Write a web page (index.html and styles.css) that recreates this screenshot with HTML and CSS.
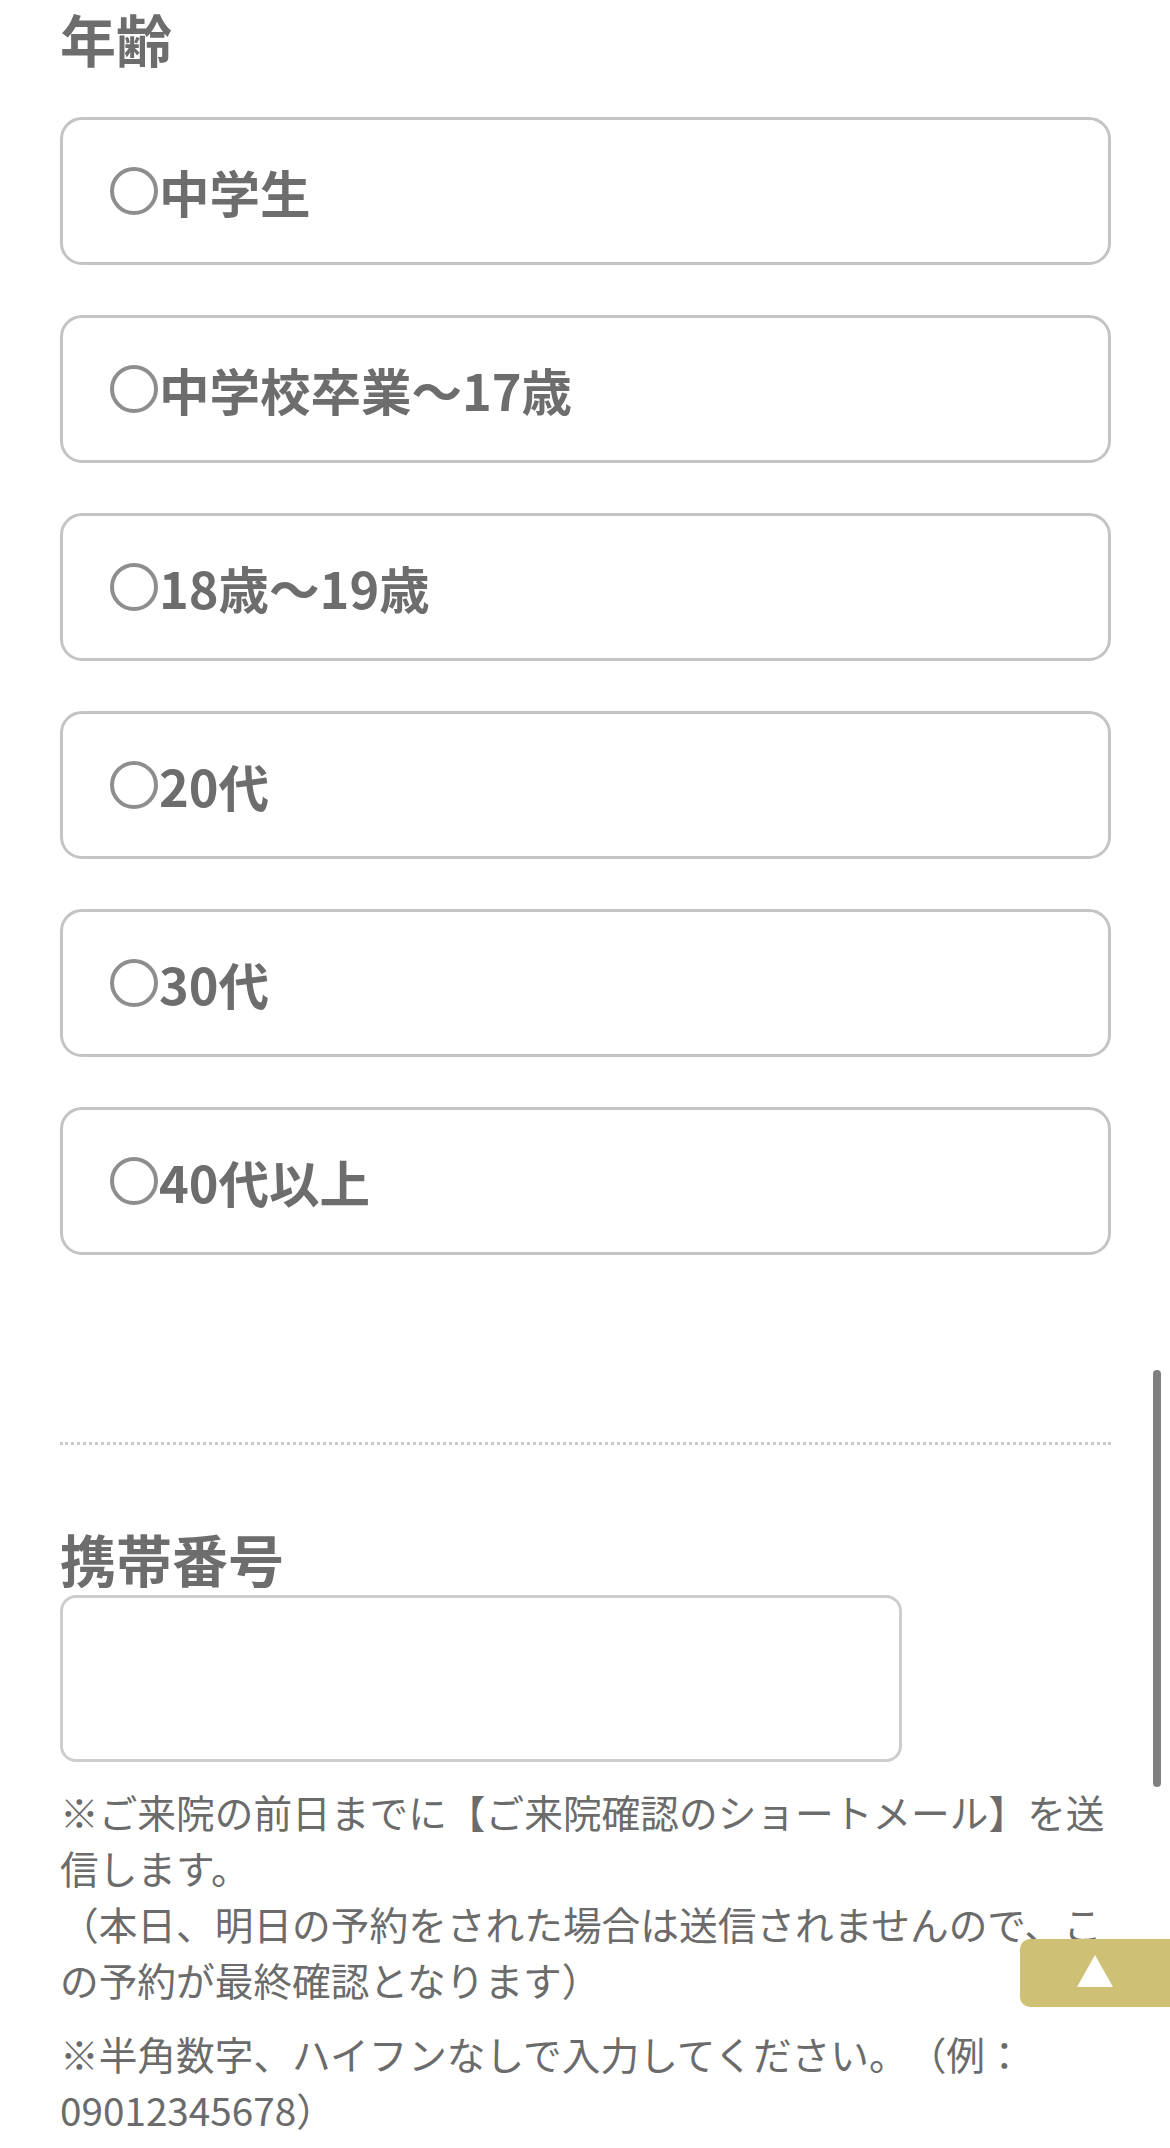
FILE: index.html
```html
<!DOCTYPE html>
<html lang="ja">
<head>
<meta charset="utf-8">
<title>予約フォーム</title>
<link rel="stylesheet" href="styles.css">
</head>
<body>
<main class="page">
  <section class="field">
    <h2 class="field-title">年齢</h2>
    <div class="options">
      <label class="option"><span class="radio"></span><span class="option-label">中学生</span></label>
      <label class="option"><span class="radio"></span><span class="option-label">中学校卒業～17歳</span></label>
      <label class="option"><span class="radio"></span><span class="option-label">18歳～19歳</span></label>
      <label class="option"><span class="radio"></span><span class="option-label">20代</span></label>
      <label class="option"><span class="radio"></span><span class="option-label">30代</span></label>
      <label class="option"><span class="radio"></span><span class="option-label">40代以上</span></label>
    </div>
  </section>

  <hr class="divider">

  <section class="field field-phone">
    <h2 class="field-title">携帯番号</h2>
    <div class="text-input"></div>
    <p class="note">※ご来院の前日までに【ご来院確認のショートメール】を送信します。<br>（本日、明日の予約をされた場合は送信されませんので、この予約が最終確認となります）</p>
    <p class="note">※半角数字、ハイフンなしで入力してください。（例：09012345678）</p>
  </section>
</main>

<div class="scroll-indicator"></div>
<a class="to-top" href="#">
  <svg class="to-top-icon" viewBox="0 0 36 32" width="36" height="32" aria-hidden="true"><polygon points="18,0 36,32 0,32" fill="#ffffff"/></svg>
</a>
</body>
</html>
```

FILE: styles.css
```css
html, body {
  margin: 0;
  padding: 0;
  background: #ffffff;
}

body {
  font-family: "Noto Sans CJK JP", "Noto Sans", sans-serif;
  color: #6e6e6e;
}

.page {
  padding: 0 59px 0 60px;
}

.field-title {
  margin: 0;
  padding-top: 4px;
  font-size: 56px;
  line-height: 68px;
  font-weight: 700;
  color: #6d6d6d;
}

.options {
  display: flex;
  flex-direction: column;
  gap: 50px;
  margin-top: 45px;
}

.option {
  display: flex;
  align-items: center;
  box-sizing: border-box;
  height: 148px;
  padding-left: 47px;
  border: 3px solid #c4c4c4;
  border-radius: 22px;
  background: #ffffff;
}

.radio {
  box-sizing: border-box;
  width: 48px;
  height: 48px;
  border: 4px solid #8e8e8e;
  border-radius: 50%;
  margin-right: 1px;
  flex: none;
}

.option-label {
  font-size: 50.5px;
  line-height: 1;
  font-weight: 700;
  color: #6d6d6d;
}

.divider {
  margin: 187px 0 0;
  border: 0;
  border-top: 3px dotted #c9c9c9;
  height: 0;
}

.field-phone {
  margin-top: 79px;
}

.field-phone .field-title {
  padding-top: 0;
}

.text-input {
  box-sizing: border-box;
  width: 842px;
  height: 167px;
  margin-top: 3px;
  border: 3px solid #cdcdcd;
  border-radius: 16px;
}

.note {
  margin: 21px 0 0;
  font-size: 38.7px;
  line-height: 56px;
  font-weight: 400;
  color: #6b6b6b;
  text-spacing-trim: space-all;
}

.note + .note {
  margin-top: 18px;
}

.scroll-indicator {
  position: fixed;
  top: 1370px;
  right: 9px;
  width: 8px;
  height: 417px;
  border-radius: 4px;
  background: #808080;
}

.to-top {
  position: fixed;
  top: 1939px;
  right: 0;
  width: 150px;
  height: 68px;
  display: flex;
  align-items: center;
  justify-content: center;
  border-radius: 10px 0 0 10px;
  background: #cec074;
}

.to-top-icon {
  display: block;
  margin-top: -4px;
}
```
